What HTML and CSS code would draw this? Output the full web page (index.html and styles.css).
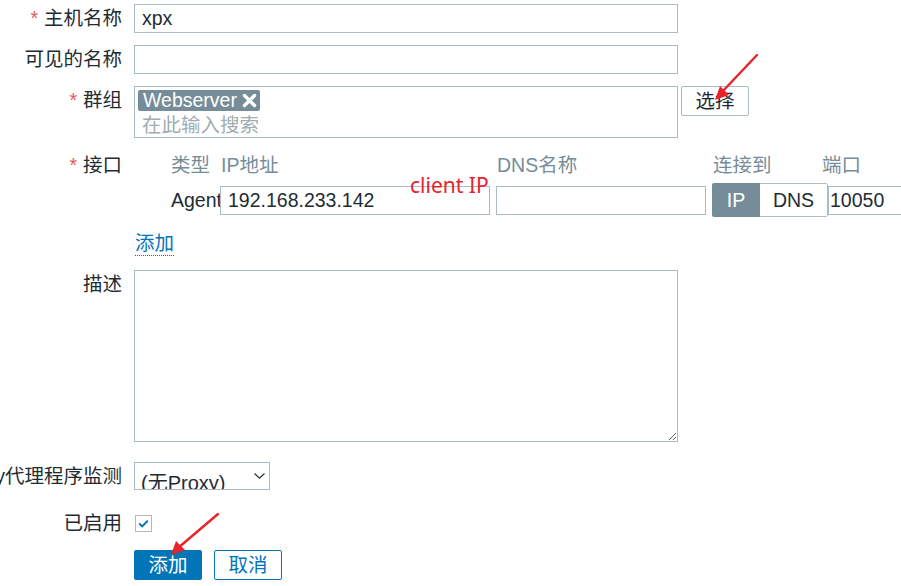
FILE: index.html
```html
<!DOCTYPE html>
<html lang="zh">
<head>
<meta charset="utf-8">
<link rel="stylesheet" href="styles.css">
</head>
<body>
<div class="form">
  <div class="row r-host">
    <div class="label"><span class="req">*</span> 主机名称</div>
    <div class="field"><div class="input wide">xpx</div></div>
  </div>
  <div class="row r-visible">
    <div class="label">可见的名称</div>
    <div class="field"><div class="input wide"></div></div>
  </div>
  <div class="row r-group">
    <div class="label"><span class="req">*</span> 群组</div>
    <div class="field group-field">
      <div class="multiselect">
        <span class="tag">Webserver <svg class="tag-x" width="15" height="15" viewBox="0 0 15 15"><path d="M2.5 2.5 L12.5 12.5 M12.5 2.5 L2.5 12.5" stroke="#fff" stroke-width="3.4" stroke-linecap="round"/></svg></span>
        <div class="placeholder">在此输入搜索</div>
      </div>
      <div class="btn-select">选择</div>
    </div>
  </div>
  <div class="row r-iface">
    <div class="label label-iface"><span class="req">*</span> 接口</div>
    <div class="field">
      <div class="iface">
        <div class="h">类型</div>
        <div class="h">IP地址</div>
        <div class="h">DNS名称</div>
        <div class="h">连接到</div>
        <div class="h">端口</div>
        <div class="agent">Agent</div>
        <div class="cell"><div class="input ip">192.168.233.142</div></div>
        <div class="cell"><div class="input dns"></div></div>
        <div class="cell"><div class="toggle"><span class="seg on">IP</span><span class="seg off">DNS</span></div></div>
        <div class="cell"><div class="input port">10050</div></div>
      </div>
      <div class="add-link"><span class="link">添加</span></div>
    </div>
  </div>
  <div class="row r-desc">
    <div class="label">描述</div>
    <div class="field"><textarea class="textarea"></textarea></div>
  </div>
  <div class="row r-proxy">
    <div class="label label-proxy">由Proxy代理程序监测</div>
    <div class="field">
      <div class="select"><span class="select-text">(无Proxy)</span>
        <svg class="chev" width="11" height="6" viewBox="0 0 11 6"><path d="M0.5 0.5 L5.5 5.2 L10.5 0.5" fill="none" stroke="#1f2c33" stroke-width="1.1"/></svg>
      </div>
    </div>
  </div>
  <div class="row r-enabled">
    <div class="label">已启用</div>
    <div class="field">
      <div class="checkbox"><svg width="15" height="15" viewBox="0 0 15 15"><path d="M3.2 7.6 L6.2 10.4 L11.8 4.6" fill="none" stroke="#0275b8" stroke-width="2"/></svg></div>
    </div>
  </div>
  <div class="row r-buttons">
    <div class="label"></div>
    <div class="field buttons">
      <div class="btn primary">添加</div>
      <div class="btn secondary">取消</div>
    </div>
  </div>
</div>

<div class="note">client IP</div>
<svg class="arrows" width="901" height="586" viewBox="0 0 901 586">
  <line x1="757" y1="55" x2="722" y2="92" stroke="#e8232a" stroke-width="2.4" stroke-linecap="round"/>
  <polygon points="715,100 720,86 729,95" fill="#e8232a"/>
  <line x1="218" y1="514" x2="178" y2="548" stroke="#e8232a" stroke-width="2.4" stroke-linecap="round"/>
  <polygon points="171,555 176,541 185,550" fill="#e8232a"/>
</svg>
</body>
</html>
```

FILE: styles.css
```css
html, body {
  margin: 0;
  padding: 0;
  background: #ffffff;
  overflow: hidden;
}
body {
  width: 901px;
  height: 586px;
  position: relative;
  font-family: "Liberation Sans", "Noto Sans CJK SC", sans-serif;
  font-size: 19.5px;
  color: #1f2c33;
}
.form {
  padding-top: 4px;
}
.row {
  display: flex;
  align-items: flex-start;
}
.label {
  width: 122px;
  flex: 0 0 122px;
  display: flex;
  justify-content: flex-end;
  white-space: nowrap;
  line-height: 29px;
  height: 29px;
}
.req {
  color: #e45959;
  margin-right: 6px;
}
.field {
  margin-left: 12px;
  flex: 1 1 auto;
  min-width: 0;
}
.input {
  box-sizing: border-box;
  height: 29px;
  border: 1px solid #acbbc2;
  background: #fff;
  padding: 0 7px;
  line-height: 27px;
  white-space: nowrap;
  overflow: hidden;
}
.wide { width: 544px; }
.r-visible { margin-top: 12px; }
.r-group { margin-top: 12px; }
.group-field {
  display: flex;
  align-items: flex-start;
}
.multiselect {
  box-sizing: border-box;
  width: 544px;
  height: 52px;
  border: 1px solid #acbbc2;
  padding: 2px 3px;
}
.tag {
  display: inline-flex;
  align-items: center;
  gap: 5px;
  background: #768d99;
  color: #fff;
  border-radius: 2px;
  height: 21px;
  line-height: 21px;
  padding: 0 3px 0 5px;
}
.tag-x {
  display: block;
}
.placeholder {
  color: #a0adb3;
  line-height: 24px;
  padding-left: 4px;
  margin-top: 1px;
}
.btn-select {
  box-sizing: border-box;
  margin-left: 3px;
  width: 68px;
  height: 30px;
  border: 1px solid #acbbc2;
  border-radius: 2px;
  text-align: center;
  line-height: 28px;
}
.r-iface { margin-top: 14px; }
.label-iface { line-height: 26px; height: 26px; }
.iface {
  display: grid;
  grid-template-columns: 37px 49px 276px 216px 109px 1fr;
  grid-template-rows: 26px 34px;
  row-gap: 5px;
}
.h {
  color: #768d99;
  line-height: 26px;
  white-space: nowrap;
  padding-left: 1px;
}
.h:first-child { grid-column: 2; padding-left: 0; }
.agent {
  grid-column: 2;
  line-height: 34px;
  white-space: nowrap;
}
.cell {
  display: flex;
  align-items: center;
  min-width: 0;
}
.ip { width: 270px; }
.dns { width: 210px; }
.toggle {
  display: flex;
  width: 116px;
  height: 34px;
  flex: 0 0 116px;
  box-sizing: border-box;
  border-radius: 2px;
  overflow: hidden;
}
.seg {
  display: block;
  box-sizing: border-box;
  text-align: center;
  line-height: 32px;
  height: 34px;
}
.seg.on {
  width: 48px;
  background: #768d99;
  color: #fff;
  line-height: 34px;
}
.seg.off {
  width: 68px;
  border: 1px solid #acbbc2;
  border-left: none;
  border-radius: 0 2px 2px 0;
  color: #1f2c33;
}
.port {
  width: 90px;
  margin-left: 7px;
  padding-left: 1px;
  flex: 0 0 90px;
}
.add-link {
  margin-top: 14px;
  height: 25px;
  padding-left: 1px;
}
.link {
  display: inline-block;
  color: #0275b8;
  line-height: 24px;
  border-bottom: 1px dotted #0275b8;
}
.r-desc { margin-top: 14px; }
.textarea {
  display: block;
  box-sizing: border-box;
  width: 544px;
  height: 172px;
  margin: 0;
  border: 1px solid #acbbc2;
  border-radius: 0;
  outline: none;
  font: inherit;
}
.r-proxy { margin-top: 20px; }
.label-proxy {
  overflow: visible;
}
.select {
  position: relative;
  box-sizing: border-box;
  width: 136px;
  height: 28px;
  border: 1px solid #acbbc2;
  overflow: hidden;
  padding: 8px 0 0 6px;
}
.select-text {
  display: block;
  font-size: 20px;
  line-height: 24px;
  white-space: nowrap;
}
.chev {
  position: absolute;
  right: 4px;
  top: 10px;
}
.r-enabled { margin-top: 18px; }
.checkbox {
  box-sizing: border-box;
  width: 17px;
  height: 17px;
  margin-top: 6px;
  margin-left: 1px;
  border: 1px solid #acbbc2;
  display: flex;
  align-items: center;
  justify-content: center;
}
.checkbox svg { display: block; }
.r-buttons { margin-top: 12px; }
.buttons {
  display: flex;
  gap: 12px;
}
.btn {
  box-sizing: border-box;
  width: 68px;
  height: 30px;
  line-height: 28px;
  text-align: center;
  border-radius: 2px;
  border: 1px solid #0275b8;
}
.btn.primary {
  background: #0275b8;
  color: #fff;
}
.btn.secondary {
  background: #fff;
  color: #0275b8;
}
.note {
  position: absolute;
  left: 410px;
  top: 171px;
  color: #e8232a;
  font-family: "Noto Sans", "Open Sans", sans-serif;
  font-size: 21px;
  line-height: 28px;
  white-space: nowrap;
}
.arrows {
  position: absolute;
  left: 0;
  top: 0;
  pointer-events: none;
}
```
